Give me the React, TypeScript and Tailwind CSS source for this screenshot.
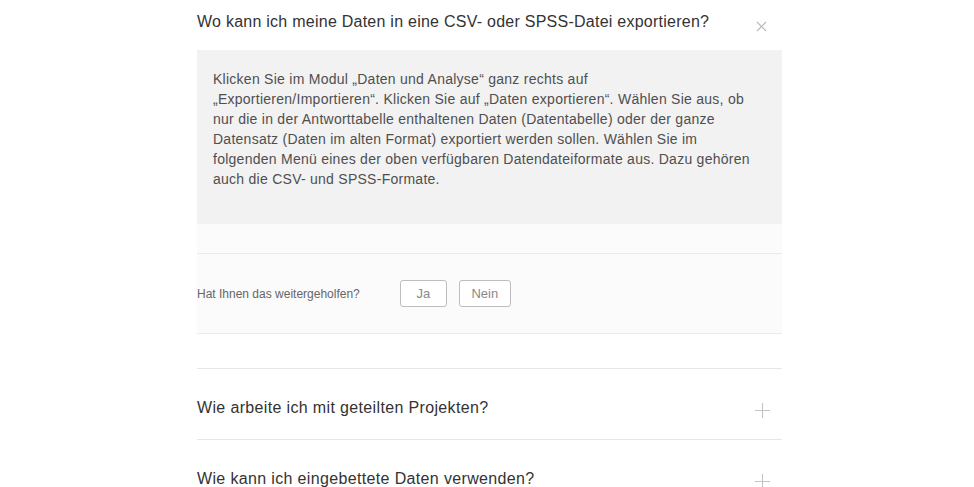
const font = { fontFamily: '"Liberation Sans", Arial, sans-serif' };

function CloseIcon() {
  return (
    <svg width="11" height="11" viewBox="0 0 11 11" className="text-[#b9b9b9]">
      <path d="M1 1 L10 10 M10 1 L1 10" stroke="currentColor" strokeWidth="1.2" fill="none" />
    </svg>
  );
}

function PlusIcon() {
  return (
    <svg width="15" height="15" viewBox="0 0 15 15" className="text-[#c4c4c4]">
      <path d="M7.5 0 V15 M0 7.5 H15" stroke="currentColor" strokeWidth="1.1" fill="none" />
    </svg>
  );
}

const lines = [
  'Klicken Sie im Modul „Daten und Analyse“ ganz rechts auf',
  '„Exportieren/Importieren“. Klicken Sie auf „Daten exportieren“. Wählen Sie aus, ob',
  'nur die in der Antworttabelle enthaltenen Daten (Datentabelle) oder der ganze',
  'Datensatz (Daten im alten Format) exportiert werden sollen. Wählen Sie im',
  'folgenden Menü eines der oben verfügbaren Datendateiformate aus. Dazu gehören',
  'auch die CSV- und SPSS-Formate.',
];

export default function App() {
  return (
    <div className="min-h-screen bg-white" style={font}>
      <div className="pl-[197px]">
        <div className="w-[585px]">
          {/* open question */}
          <div className="flex items-start justify-between h-[50px] pt-[12px]">
            <h2 className="text-[16px] leading-[20px] tracking-[0.25px] text-[#333]">
              Wo kann ich meine Daten in eine CSV- oder SPSS-Datei exportieren?
            </h2>
            <div className="mt-[9px] mr-[15px]">
              <CloseIcon />
            </div>
          </div>

          <div className="bg-[#f2f2f2] px-[16px] pt-[19px] pb-[35px]">
            <p className="text-[14px] leading-[20px] tracking-[0.26px] text-[#4f4f4f]">
              {lines.map((l, i) => (
                <span key={i}>
                  {l}
                  {i < lines.length - 1 && <br />}
                </span>
              ))}
            </p>
          </div>

          <div className="bg-[#fbfbfb]">
            <div className="h-[30px] border-b border-[#ebebeb]" />
            <div className="flex items-center h-[80px] border-b border-[#ebebeb]">
              <span className="text-[12px] text-[#666]">Hat Ihnen das weitergeholfen?</span>
              <button className="ml-[40px] w-[47px] h-[27px] border border-[#bdbdbd] rounded-[3px] text-[13px] text-[#888] bg-white">
                Ja
              </button>
              <button className="ml-[12px] w-[52px] h-[27px] border border-[#bdbdbd] rounded-[3px] text-[13px] text-[#888] bg-white">
                Nein
              </button>
            </div>
          </div>

          <div className="h-[34px]" />

          {/* collapsed questions */}
          <div className="border-t border-[#e6e6e6]">
            <div className="flex items-start justify-between h-[71px] pt-[29px] border-b border-[#e6e6e6]">
              <h2 className="text-[16px] leading-[20px] tracking-[0.35px] text-[#333]">
                Wie arbeite ich mit geteilten Projekten?
              </h2>
              <div className="mt-[5px] mr-[12px]">
                <PlusIcon />
              </div>
            </div>
            <div className="flex items-start justify-between h-[71px] pt-[29px]">
              <h2 className="text-[16px] leading-[20px] tracking-[0.35px] text-[#333]">
                Wie kann ich eingebettete Daten verwenden?
              </h2>
              <div className="mt-[5px] mr-[12px]">
                <PlusIcon />
              </div>
            </div>
          </div>
        </div>
      </div>
    </div>
  );
}
